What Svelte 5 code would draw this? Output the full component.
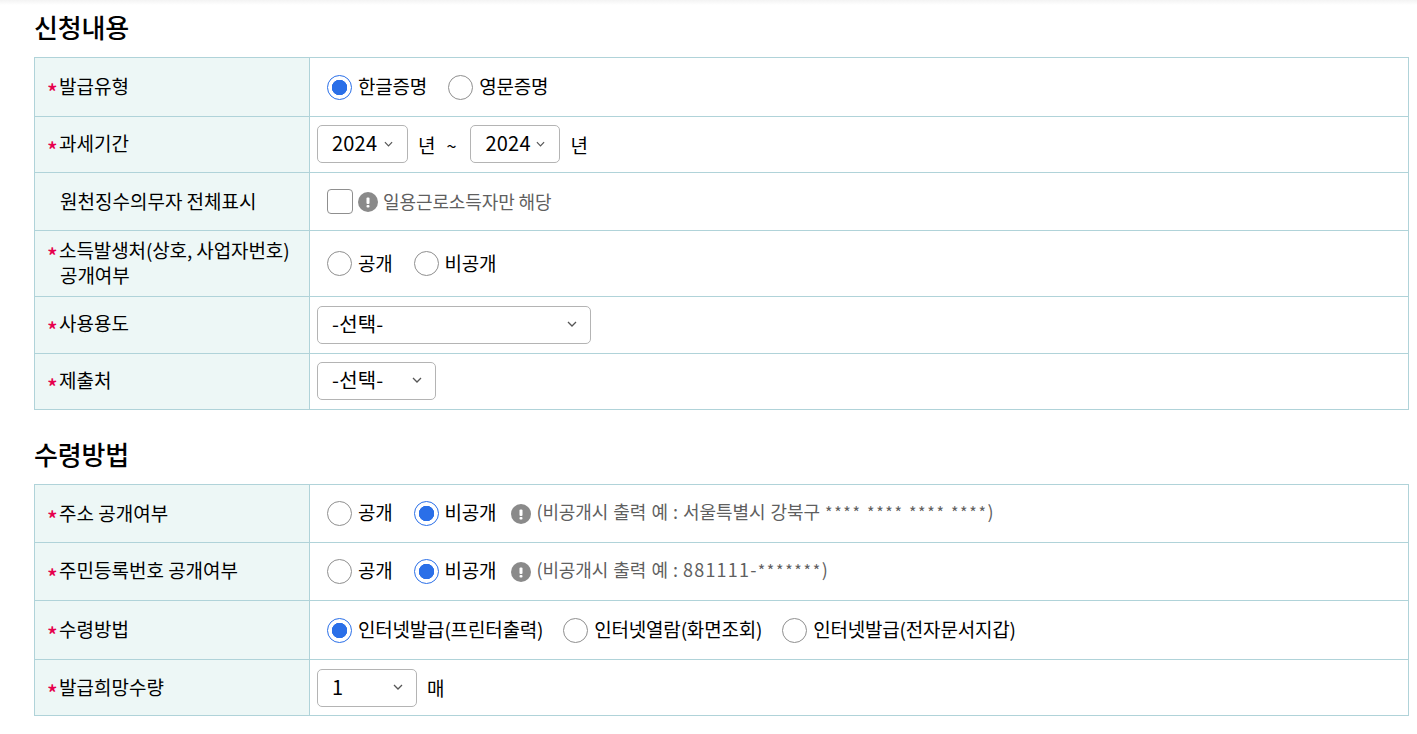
<script>
  const years = ["2024", "2023", "2022"];
</script>

<div class="page">
  <div class="topshade"></div>

  <h2 class="first">신청내용</h2>
  <div class="form">
    <div class="row h59">
      <div class="label req">발급유형</div>
      <div class="cell pad">
        <label class="opt"><input type="radio" name="type" checked /><span>한글증명</span></label>
        <label class="opt"><input type="radio" name="type" /><span>영문증명</span></label>
      </div>
    </div>
    <div class="row h56">
      <div class="label req lift">과세기간</div>
      <div class="cell">
        <div class="sel y1 up">
          <select>{#each years as y}<option>{y}</option>{/each}</select>
          {@render chevron()}
        </div>
        <span class="unit">년</span>
        <span class="tilde">~</span>
        <div class="sel y2 up">
          <select>{#each years as y}<option>{y}</option>{/each}</select>
          {@render chevron()}
        </div>
        <span class="unit">년</span>
      </div>
    </div>
    <div class="row h58">
      <div class="label plain">원천징수의무자 전체표시</div>
      <div class="cell pad">
        <input class="check" type="checkbox" />
        {@render info()}
        <span class="hint">일용근로소득자만 해당</span>
      </div>
    </div>
    <div class="row h66">
      <div class="label req two">소득발생처(상호, 사업자번호)<br /><span class="second">공개여부</span></div>
      <div class="cell pad">
        <label class="opt"><input type="radio" name="src" /><span>공개</span></label>
        <label class="opt"><input type="radio" name="src" /><span>비공개</span></label>
      </div>
    </div>
    <div class="row h57">
      <div class="label req lift">사용용도</div>
      <div class="cell">
        <div class="sel use"><select><option>-선택-</option></select>{@render chevron()}</div>
      </div>
    </div>
    <div class="row h56">
      <div class="label req lift">제출처</div>
      <div class="cell">
        <div class="sel dest up"><select><option>-선택-</option></select>{@render chevron()}</div>
      </div>
    </div>
  </div>

  <h2>수령방법</h2>
  <div class="form">
    <div class="row h58">
      <div class="label req">주소 공개여부</div>
      <div class="cell pad">
        <label class="opt"><input type="radio" name="addr" /><span>공개</span></label>
        <label class="opt"><input type="radio" name="addr" checked /><span>비공개</span></label>
        {@render info()}
        <span class="hint note">(비공개시 출력 예 : 서울특별시 강북구 <i>**** **** **** ****</i>)</span>
      </div>
    </div>
    <div class="row h58">
      <div class="label req lift">주민등록번호 공개여부</div>
      <div class="cell pad">
        <label class="opt"><input type="radio" name="rrn" /><span>공개</span></label>
        <label class="opt"><input type="radio" name="rrn" checked /><span>비공개</span></label>
        {@render info()}
        <span class="hint note">(비공개시 출력 예 : <b>881111-</b><i>*******</i>)</span>
      </div>
    </div>
    <div class="row h59">
      <div class="label req">수령방법</div>
      <div class="cell pad tight">
        <label class="opt"><input type="radio" name="how" checked /><span>인터넷발급(프린터출력)</span></label>
        <label class="opt"><input type="radio" name="how" /><span>인터넷열람(화면조회)</span></label>
        <label class="opt"><input type="radio" name="how" /><span>인터넷발급(전자문서지갑)</span></label>
      </div>
    </div>
    <div class="row h56">
      <div class="label req">발급희망수량</div>
      <div class="cell">
        <div class="sel qty"><select><option>1</option></select>{@render chevron()}</div>
        <span class="unit">매</span>
      </div>
    </div>
  </div>
</div>

{#snippet chevron()}
  <svg class="chev" width="10" height="6" viewBox="0 0 10 6" aria-hidden="true">
    <path d="M1 1l4 4 4-4" fill="none" stroke="#555" stroke-width="1.3" />
  </svg>
{/snippet}

{#snippet info()}
  <svg class="info" width="20" height="20" viewBox="0 0 20 20" aria-hidden="true">
    <circle cx="10" cy="10" r="10" fill="#8a8a8a" />
    <rect x="8.5" y="5.5" width="3" height="6.5" rx="1" fill="#fff" />
    <rect x="8.5" y="13" width="3" height="2.5" rx="1" fill="#fff" />
  </svg>
{/snippet}

<style>
  :global(body) {
    margin: 0;
    background: #fff;
    font-family: "Noto Sans CJK KR", "Noto Sans", sans-serif;
    color: #000;
  }

  .page {
    position: relative;
    box-sizing: border-box;
    height: 734px;
    padding: 0 8px 0 34px;
    overflow: hidden;
  }

  .topshade {
    position: absolute;
    left: 0;
    right: 0;
    top: 0;
    height: 5px;
    background: linear-gradient(#f3f3f3, #fff);
  }

  h2 {
    margin: 0;
    height: 74px;
    padding-top: 25px;
    box-sizing: border-box;
    font-size: 26px;
    line-height: 37px;
    font-weight: 500;
    letter-spacing: -0.2px;
    color: #000;
  }

  h2.first {
    height: 57px;
    padding-top: 8px;
  }

  .form {
    border: 1px solid #b0d3d9;
    border-bottom: 0;
  }

  .row {
    display: flex;
    box-sizing: border-box;
    border-bottom: 1px solid #b0d3d9;
  }

  .h56 { height: 56px; }
  .h57 { height: 57px; }
  .h58 { height: 58px; }
  .h59 { height: 59px; }
  .h66 { height: 66px; }

  .label {
    position: relative;
    box-sizing: border-box;
    flex: 0 0 275px;
    display: flex;
    align-items: center;
    padding: 0 0 3px 24px;
    background: #edf7f6;
    border-right: 1px solid #b0d3d9;
    font-size: 19px;
    line-height: 25px;
    white-space: nowrap;
  }

  .label.lift {
    padding-bottom: 5px;
  }

  .label.plain {
    padding-left: 25px;
  }

  .label.two {
    display: block;
    padding-top: 6px;
    letter-spacing: -0.1px;
  }

  .second {
    margin-left: 1px;
  }

  .req::before {
    content: "*";
    position: absolute;
    left: 12px;
    top: 50%;
    margin-top: -8px;
    color: #e6004c;
    font-size: 22px;
    font-weight: 500;
    line-height: 25px;
  }

  .req.two::before {
    top: 11px;
    margin-top: 0;
    line-height: 27px;
  }

  .cell {
    flex: 1;
    display: flex;
    align-items: center;
    padding-left: 7px;
    font-size: 19px;
  }

  .cell.pad {
    padding-left: 17px;
  }

  .opt {
    display: inline-flex;
    align-items: center;
    margin-right: 21px;
    line-height: 25px;
  }

  .tight .opt {
    margin-right: 20px;
  }

  .opt span {
    margin-left: 6px;
    letter-spacing: -0.2px;
    position: relative;
    top: -2px;
  }

  .h66 .opt span {
    top: -1px;
  }

  input[type="radio"] {
    appearance: none;
    box-sizing: border-box;
    width: 25px;
    height: 25px;
    margin: 0;
    border: 1px solid #8f8f8f;
    border-radius: 50%;
    background: #fff;
  }

  input[type="radio"]:checked {
    border-color: #2a6fe8;
    background: radial-gradient(circle, #2a6fe8 0 7.5px, #fff 8px);
  }

  .check {
    appearance: none;
    box-sizing: border-box;
    width: 26px;
    height: 25px;
    margin: 0;
    border: 1px solid #8f8f8f;
    border-radius: 4px;
    background: #fff;
  }

  .info {
    flex: none;
    margin: 0 5px 0 5px;
  }

  .opt + .info {
    margin-left: -6px;
  }

  .hint {
    font-size: 18px;
    letter-spacing: -0.1px;
    color: #5f5f5f;
    position: relative;
    top: -1px;
    white-space: nowrap;
  }

  .hint.note {
    top: -3px;
    word-spacing: 1.2px;
  }

  .hint b {
    font-weight: 400;
    letter-spacing: 1.2px;
  }

  .hint i {
    font-style: normal;
    font-size: 16px;
    letter-spacing: 1.7px;
    word-spacing: 0;
  }

  .sel {
    position: relative;
    height: 38px;
    flex: none;
  }

  .sel.up {
    margin-top: -1px;
  }

  .sel select {
    appearance: none;
    box-sizing: border-box;
    width: 100%;
    height: 100%;
    padding: 0 0 3px 14px;
    border: 1px solid #b4b4b4;
    border-radius: 5px;
    background: #fff;
    color: #000;
    font: inherit;
    font-size: 20px;
    letter-spacing: 0.2px;
  }

  .chev {
    position: absolute;
    top: 15px;
    right: 14px;
    pointer-events: none;
  }

  .y1 { width: 91px; }
  .y2 { width: 90px; }
  .use { width: 274px; }
  .dest { width: 119px; }
  .qty { width: 100px; }

  .y1 .chev, .y2 .chev { right: 15px; top: 16px; width: 9px; }

  .unit {
    margin-left: 10px;
  }

  .tilde {
    margin: 0 14px 0 11px;
    font-size: 18px;
  }
</style>
